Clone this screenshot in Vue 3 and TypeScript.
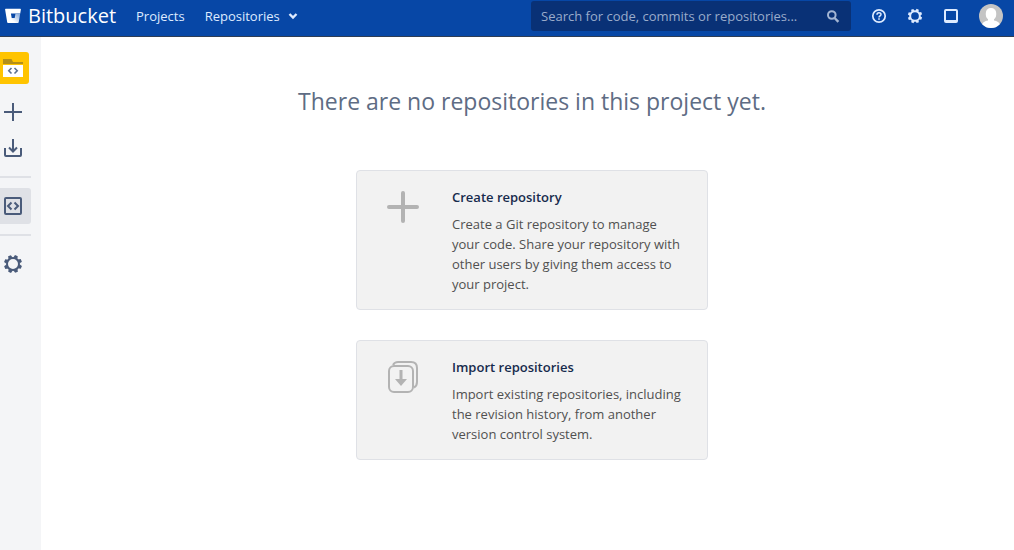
<script setup lang="ts">
import { ref } from 'vue'

interface Choice {
  id: string
  title: string
  text: string
}

const query = ref('')

const choices: Choice[] = [
  {
    id: 'create',
    title: 'Create repository',
    text: 'Create a Git repository to manage your code. Share your repository with other users by giving them access to your project.',
  },
  {
    id: 'import',
    title: 'Import repositories',
    text: 'Import existing repositories, including the revision history, from another version control system.',
  },
]

const cog = Array.from({ length: 8 }, (_, i) => i * 45 + 22)
</script>

<template>
  <div class="app">
    <header class="topbar">
      <a class="brand" href="#">
        <svg width="16" height="16" viewBox="0 0 16 16" aria-hidden="true">
          <defs>
            <linearGradient id="bucket" x1="1" y1="0.2" x2="0.4" y2="0.8">
              <stop offset="0" stop-color="#8fb0de" />
              <stop offset="1" stop-color="#fff" />
            </linearGradient>
          </defs>
          <path fill="#fff" d="M.6.8h14.8a.5.5 0 0 1 .5.6L15.200 5.500H5.900l.8 4.500h3l-4.800 5H3a.8.8 0 0 1-.8-.7L.1 1.400A.5.5 0 0 1 .6.8z" />
          <path fill="url(#bucket)" d="M15.200 5.500 13.700 14.300a.8.8 0 0 1-.8.7H3.200L6.700 10h3l.8-4.500z" />
        </svg>
        <span>Bitbucket</span>
      </a>
      <nav class="links" aria-label="Main">
        <a href="#">Projects</a>
        <button type="button">
          Repositories
          <svg width="10" height="8" viewBox="0 0 10 8" aria-hidden="true">
            <path d="M1.500 2 5 5.500 8.500 2" fill="none" stroke="currentColor" stroke-width="2.400" />
          </svg>
        </button>
      </nav>
      <form class="search" role="search" @submit.prevent>
        <input v-model="query" type="text" aria-label="Search" placeholder="Search for code, commits or repositories..." />
        <button type="submit" aria-label="Submit search">
          <svg width="14" height="14" viewBox="0 0 14 14" aria-hidden="true">
            <circle cx="5.800" cy="6" r="3.800" fill="none" stroke="currentColor" stroke-width="2" />
            <path d="m8.600 9 3.800 3.800" stroke="currentColor" stroke-width="2.400" />
          </svg>
        </button>
      </form>
      <div class="tools">
        <button type="button" aria-label="Help">
          <svg width="16" height="16" viewBox="0 0 16 16" fill="none" stroke="currentColor" aria-hidden="true">
            <circle cx="8" cy="8" r="6.200" stroke-width="1.700" />
            <path d="M6 6.700C6 4.200 10 4.200 10 6.500 10 7.800 8 7.900 8 9.500" stroke-width="1.500" />
            <path d="M8 10.300v1.500" stroke-width="1.600" />
          </svg>
        </button>
        <button type="button" aria-label="Administration">
          <svg width="16" height="16" viewBox="-10 -10 20 20" aria-hidden="true">
            <circle r="6" fill="none" stroke="currentColor" stroke-width="2.400" />
            <path v-for="a in cog" :key="a" d="M-2-6.200-1.500-9h3L2-6.200z" fill="currentColor" :transform="`rotate(${a})`" />
          </svg>
        </button>
        <button type="button" aria-label="Inbox">
          <svg width="16" height="16" viewBox="0 0 16 16" aria-hidden="true">
            <rect x="2" y="2" width="12" height="12" rx="1" fill="none" stroke="currentColor" stroke-width="2" />
            <path d="M2 12h12v2H9l-1-1-1 1H2z" fill="currentColor" />
          </svg>
        </button>
        <button type="button" aria-label="Your account">
          <svg width="24" height="24" viewBox="0 0 24 24" aria-hidden="true">
            <defs><clipPath id="round"><circle cx="12" cy="12" r="12" /></clipPath></defs>
            <g clip-path="url(#round)">
              <path fill="#c4c4c4" d="M0 0h24v24H0z" />
              <rect x="6.800" y="4" width="10.400" height="12" rx="5" fill="#fff" />
              <path fill="#fff" d="M9 13h6v3.500c3 .8 5.500 1.500 6 4.500L18 24H6l-3-3c.5-3 3-3.700 6-4.500z" />
            </g>
          </svg>
        </button>
      </div>
    </header>

    <div class="body">
      <nav class="sidebar" aria-label="Project">
        <a class="project" href="#" aria-label="Project home">
          <svg width="29" height="32" viewBox="0 0 29 32" aria-hidden="true">
            <path fill="#ffc400" d="M0 0h26a3 3 0 0 1 3 3v26a3 3 0 0 1-3 3H0z" />
            <path fill="#b38f18" d="M3 7h8.500l1.500 3h10v2H3z" />
            <path fill="#fff" d="M3 13h20v12H3z" />
            <path d="M11.500 16 8.800 18.800l2.700 2.700M14.500 16l2.700 2.800-2.700 2.700" fill="none" stroke="#5b6f8f" stroke-width="1.600" />
          </svg>
        </a>
        <a class="item first" href="#" aria-label="Create repository">
          <svg width="20" height="20" viewBox="0 0 20 20" aria-hidden="true">
            <path d="M10 1v18M1 10h18" stroke="currentColor" stroke-width="2" />
          </svg>
        </a>
        <a class="item" href="#" aria-label="Import repositories">
          <svg width="20" height="20" viewBox="0 0 20 20" fill="none" stroke="currentColor" stroke-width="2" aria-hidden="true">
            <path d="M2 10v7q0 1 1 1h14q1 0 1-1v-7M10 1v12M6 9.500l4 4 4-4" />
          </svg>
        </a>
        <hr />
        <a class="item active" href="#" aria-label="Repositories" aria-current="page">
          <svg width="20" height="20" viewBox="0 0 20 20" fill="none" stroke="currentColor" stroke-width="2" aria-hidden="true">
            <rect x="2" y="2" width="16" height="16" rx="1" />
            <path d="M8.500 6.500 5 10l3.500 3.500M11.500 6.500 15 10l-3.500 3.500" />
          </svg>
        </a>
        <hr />
        <a class="item" href="#" aria-label="Project settings">
          <svg width="20" height="20" viewBox="-10 -10 20 20" aria-hidden="true">
            <circle r="6" fill="none" stroke="currentColor" stroke-width="2" />
            <path v-for="a in cog" :key="a" d="M-2.200-6.200-1.500-9h3L2.200-6.200z" fill="currentColor" :transform="`rotate(${a})`" />
          </svg>
        </a>
      </nav>

      <main class="content">
        <h1>There are no repositories in this project yet.</h1>
        <a v-for="choice in choices" :key="choice.id" class="card" href="#">
          <svg v-if="choice.id === 'create'" width="34" height="34" viewBox="0 0 34 34" aria-hidden="true">
            <path d="M17 3v28M3 17h28" stroke="#b3b3b3" stroke-width="4" stroke-linecap="round" />
          </svg>
          <svg v-else width="34" height="34" viewBox="0 0 34 34" fill="none" stroke="#b3b3b3" stroke-width="2" aria-hidden="true">
            <rect x="3" y="6" width="24" height="26" rx="5" />
            <path d="M7 5q1.500-3 5-3h13q6 0 6 6v14q0 4-3 5.500" />
            <path d="M15 10v10" stroke-width="3" />
            <path d="M9 19h12l-6 7z" fill="#b3b3b3" stroke="none" />
          </svg>
          <span class="copy">
            <strong>{{ choice.title }}</strong>
            <span>{{ choice.text }}</span>
          </span>
        </a>
      </main>
    </div>
  </div>
</template>

<style>
body {
  margin: 0;
  background: #fff;
}
</style>

<style scoped>
.app {
  display: flex;
  flex-direction: column;
  min-height: 100vh;
  font-family: "Open Sans", "Noto Sans", sans-serif;
  font-size: 13px;
  line-height: 20px;
}
* {
  box-sizing: border-box;
}
a {
  color: inherit;
  text-decoration: none;
}
button {
  padding: 0;
  border: 0;
  background: none;
  color: inherit;
  font: inherit;
  cursor: pointer;
}
svg {
  display: block;
  flex: none;
}
.topbar {
  display: flex;
  align-items: center;
  height: 37px;
  padding: 0 11px 5px 5px;
  border-bottom: 1px solid #2e3d54;
  background: #0747a6;
  color: #deebff;
}
.brand {
  display: flex;
  align-items: center;
  gap: 7px;
  color: #fff;
  font-size: 20px;
}
.links {
  display: flex;
  gap: 20px;
  margin-left: 20px;
}
.links button {
  display: flex;
  align-items: center;
  gap: 8px;
}
.search {
  display: flex;
  align-items: center;
  width: 320px;
  height: 30px;
  margin-left: auto;
  padding: 0 11px 0 10px;
  border-radius: 3px;
  background: #093176;
  color: #a3b5d3;
}
.search input {
  flex: 1;
  min-width: 0;
  padding: 0;
  border: 0;
  outline: 0;
  background: none;
  color: inherit;
  font: inherit;
}
.search input::placeholder {
  color: #9aaccb;
  opacity: 1;
}
.tools {
  display: flex;
  align-items: center;
  gap: 20px;
  margin-left: 20px;
}
.body {
  display: flex;
  flex: 1;
}
.sidebar {
  display: flex;
  flex-direction: column;
  width: 41px;
  padding: 15px 10px 0 0;
  background: #f4f5f7;
  color: #4a5b7a;
}
.item {
  display: flex;
  align-items: center;
  height: 36px;
  padding-left: 3px;
  border-radius: 0 3px 3px 0;
}
.item.first {
  margin-top: 10px;
}
.item.active {
  background: #dfe1e6;
}
.sidebar hr {
  width: 100%;
  height: 2px;
  margin: 10px 0;
  border: 0;
  background: #dfe1e6;
}
.content {
  display: flex;
  flex: 1;
  flex-direction: column;
  align-items: center;
  gap: 30px;
  padding: 49px 0 30px 9px;
}
h1 {
  margin: 0 0 24px;
  color: #5e6c84;
  font-size: 23px;
  font-weight: 400;
  line-height: 30px;
}
.card {
  display: flex;
  gap: 32px;
  width: 352px;
  padding: 19px 21px 15px 29px;
  border: 1px solid #dfe1e6;
  border-radius: 4px;
  background: #f2f2f2;
  color: #505050;
}
.copy {
  display: flex;
  flex-direction: column;
  gap: 7px;
  margin-top: -3px;
}
.copy strong {
  color: #172b4d;
  font-weight: 600;
}
</style>
